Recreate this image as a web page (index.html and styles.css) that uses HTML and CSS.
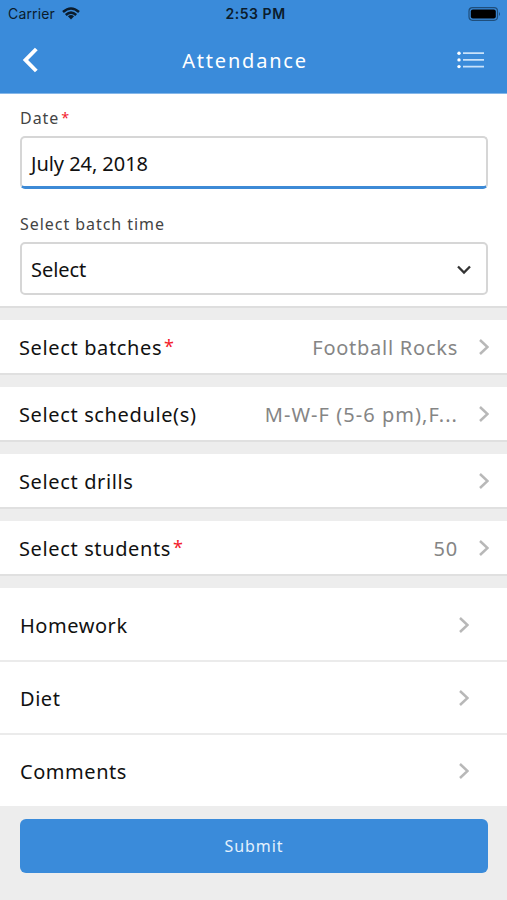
FILE: index.html
```html
<!DOCTYPE html>
<html lang="en">
<head>
<meta charset="utf-8">
<title>Attendance</title>
<link rel="stylesheet" href="styles.css">
</head>
<body>
<header class="header">
  <div class="status">
    <div class="carrier"><span>Carrier</span>
      <svg width="18" height="13" viewBox="0 0 18 13" fill="none" stroke="#0b1c2c" stroke-width="2.5"><path d="M1 5Q9-2 17 5"/><path d="M3.8 8Q9 3.2 14.2 8"/><path d="M9 12.4L5.9 9.3Q9 6.8 12.1 9.3Z" fill="#0b1c2c" stroke="none"/></svg>
    </div>
    <div class="clock">2:53 PM</div>
    <svg class="battery" width="33" height="14" viewBox="0 0 33 14"><rect x="1" y=".7" width="28.5" height="12.6" rx="3.5" fill="none" stroke="#1f4e7b" stroke-width="1.2"/><rect x="2.8" y="2.4" width="25" height="9.2" rx="2" fill="#000"/><path d="M31 5Q33 7 31 9Z" fill="#1f4e7b"/></svg>
  </div>
  <div class="nav">
    <svg width="16" height="26" viewBox="0 0 16 26" fill="none" stroke="#fff" stroke-width="3.9"><path d="M14.3 2L3.5 13L14.3 24"/></svg>
    <h1 class="title">Attendance</h1>
    <svg width="28" height="18" viewBox="0 0 28 18"><g fill="#fff"><circle cx="2" cy="2.2" r="1.7"/><circle cx="2" cy="8.9" r="1.7"/><circle cx="2" cy="15.6" r="1.7"/></g><path d="M6 2.2H27M6 8.9H27M6 15.6H27" stroke="#c9e2fa" stroke-width="1.8"/></svg>
  </div>
</header>
<main>
  <section class="form">
    <label class="label">Date<span class="req">*</span></label>
    <div class="field focused">July 24, 2018</div>
    <label class="label batch-label">Select batch time</label>
    <div class="field"><span>Select</span><svg width="14" height="10" viewBox="0 0 14 10" fill="none" stroke="#333" stroke-width="2.3"><path d="M1 1.5L7 7.5L13 1.5"/></svg></div>
  </section>
  <section class="row"><span class="name">Select batches<span class="req">*</span></span><span class="value">Football Rocks</span><svg class="chev" viewBox="0 0 10 16"><path d="M1 1L8.5 8L1 15"/></svg></section>
  <section class="row"><span class="name">Select schedule(s)</span><span class="value schedule">M-W-F (5-6 pm),F...</span><svg class="chev" viewBox="0 0 10 16"><path d="M1 1L8.5 8L1 15"/></svg></section>
  <section class="row"><span class="name">Select drills</span><svg class="chev" viewBox="0 0 10 16"><path d="M1 1L8.5 8L1 15"/></svg></section>
  <section class="row"><span class="name">Select students<span class="req">*</span></span><span class="value">50</span><svg class="chev" viewBox="0 0 10 16"><path d="M1 1L8.5 8L1 15"/></svg></section>
  <section class="list">
    <div class="item"><span>Homework</span><svg class="chev" viewBox="0 0 10 16"><path d="M1 1L8.5 8L1 15"/></svg></div>
    <div class="item"><span>Diet</span><svg class="chev" viewBox="0 0 10 16"><path d="M1 1L8.5 8L1 15"/></svg></div>
    <div class="item"><span>Comments</span><svg class="chev" viewBox="0 0 10 16"><path d="M1 1L8.5 8L1 15"/></svg></div>
  </section>
  <button class="submit">Submit</button>
</main>
</body>
</html>
```
FILE: styles.css
```css
* { box-sizing: border-box; }
body {
  margin: 0;
  height: 900px;
  overflow: hidden;
  background: #ededed;
  font-family: "Noto Sans", sans-serif;
  color: #111;
}
svg { display: block; flex: none; }
.header { height: 94px; background: #3a8bda; border-bottom: 1px solid #85b7e9; }
.status {
  height: 27px;
  padding: 0 6px 0 8px;
  display: grid;
  grid-template-columns: 1fr auto 1fr;
  align-items: center;
  color: #0b1c2c;
  font: 14px/27px Inter, sans-serif;
}
.carrier { display: flex; align-items: center; gap: 7px; letter-spacing: 0.15px; }
.clock { font-weight: 600; letter-spacing: 0.55px; margin-left: 2px; }
.battery { justify-self: end; }
.nav {
  height: 66px;
  padding: 0 22px;
  display: flex;
  align-items: center;
}
.title {
  flex: 1;
  margin: 2px 0 0;
  padding-right: 5px;
  font-size: 20px;
  font-weight: 400;
  line-height: 28px;
  letter-spacing: 1.8px;
  text-align: center;
  color: #fff;
}
.form { height: 214px; padding: 13px 19px 0 20px; background: #fff; border-bottom: 2px solid #dedede; }
.label { display: block; font-size: 16px; line-height: 22px; color: #444; letter-spacing: 0.95px; }
.req { color: #f3202b; margin-left: 2px; font-size: 0.9em; line-height: 1; vertical-align: 1px; }
.field {
  height: 53px;
  margin-top: 7px;
  padding: 2px 15px 0 9px;
  display: flex;
  align-items: center;
  justify-content: space-between;
  border: 2px solid #d6d6d6;
  border-radius: 5px;
  font-size: 20px;
  letter-spacing: -0.05px;
}
.focused { border-bottom: 3px solid #3d8ad6; }
.batch-label { margin-top: 24px; }
.row {
  height: 55px;
  margin-top: 12px;
  padding: 0 18px 0 19px;
  display: flex;
  align-items: center;
  background: #fff;
  border-bottom: 2px solid #e0e0e0;
  font-size: 20px;
  letter-spacing: 0.63px;
}
.name { flex: 1; padding-top: 2px; }
.name .req { vertical-align: 2px; }
.value { color: #858585; margin-right: 21px; padding-top: 2px; letter-spacing: 0.75px; }
.schedule { letter-spacing: 1.05px; }
.chev { width: 10px; height: 16px; fill: none; stroke: #b8b8b8; stroke-width: 2.5; }
.list { margin-top: 12px; background: #fff; }
.item {
  height: 73px;
  padding: 0 38px 0 20px;
  display: flex;
  align-items: center;
  justify-content: space-between;
  font-size: 20px;
  letter-spacing: 0.55px;
}
.item:first-child { height: 72px; padding-top: 2px; }
.item + .item { border-top: 2px solid #ebebeb; }
.item + .item span { padding-top: 2px; }
.submit {
  display: block;
  width: 468px;
  height: 54px;
  margin: 13px 0 0 20px;
  padding: 1px 0 0;
  border: 0;
  border-radius: 6px;
  background: #3a8bda;
  color: #e4f1fd;
  font: 16px/53px "Noto Sans", sans-serif;
  letter-spacing: 0.9px;
}
```
